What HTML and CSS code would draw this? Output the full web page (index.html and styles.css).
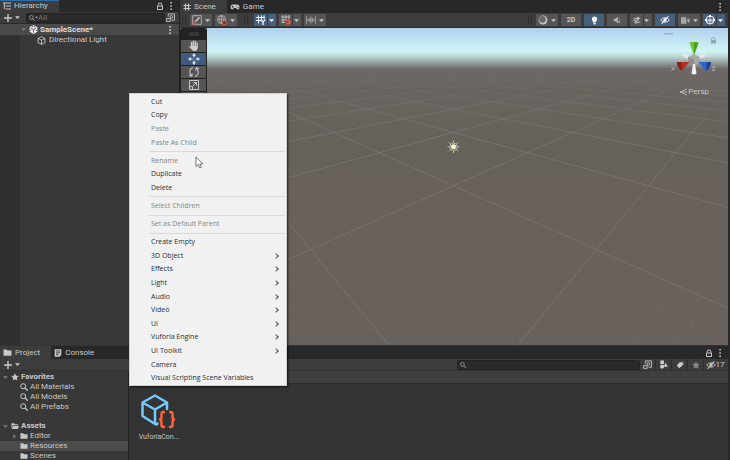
FILE: index.html
```html
<!DOCTYPE html>
<html lang="en">
<head>
<meta charset="utf-8">
<title>SampleScene</title>
<link rel="stylesheet" href="styles.css">
</head>
<body>
<svg class="sprite" aria-hidden="true">
  <symbol id="lock" viewBox="0 0 8 8"><path d="M2.200 3.500V2.200q0-1.200 1.800-1.200t1.800 1.200V4" fill="none" stroke="currentColor"/><path d="M1.500 4h5V7.500h-5z" fill="none" stroke="currentColor"/></symbol>
  <symbol id="dots" viewBox="0 0 8 8"><path d="M3.300 0h1.600v1.600H3.300zM3.300 3.200h1.600v1.600H3.300zM3.300 6.400h1.600V8H3.300z" fill="currentColor"/></symbol>
  <symbol id="plus" viewBox="0 0 8 8"><path d="M4 0v8M0 4h8" stroke="currentColor" stroke-width="1.400"/></symbol>
  <symbol id="down" viewBox="0 0 8 8"><path d="M0 2h8L4 6.500z" fill="currentColor"/></symbol>
  <symbol id="right" viewBox="0 0 8 8"><path d="M2 0v8l4.500-4z" fill="currentColor"/></symbol>
  <symbol id="search" viewBox="0 0 8 8"><circle cx="3.200" cy="3.200" r="2.500" fill="none" stroke="currentColor"/><path d="M5 5l2.700 2.700" stroke="currentColor" stroke-width="1.300"/></symbol>
  <symbol id="picker" viewBox="0 0 10 10"><path d="M2.500 4V1h7v7H6" fill="none" stroke="currentColor"/><path d="M.7 6h4v3.300h-4z" fill="none" stroke="currentColor"/><circle cx="6" cy="4.300" r="1.500" fill="none" stroke="currentColor"/></symbol>
  <symbol id="tree" viewBox="0 0 8 8"><path d="M0 1h8M2.500 4H8M2.500 7H8M1.300 1v6" fill="none" stroke="currentColor"/></symbol>
  <symbol id="hash" viewBox="0 0 8 8"><path d="M2.500.5v7M5.500.5v7M.5 2.500h7M.5 5.500h7" stroke="currentColor" stroke-width="1.100"/></symbol>
  <symbol id="game" viewBox="0 0 10 8"><path d="M2.500 1.500h5Q9.500 1.500 9.500 4T7.500 6.500L6 5H4L2.500 6.500Q.5 6.500.5 4t2-2.500z" fill="currentColor"/><path d="M1.700 3.800h2M2.700 2.800v2M6.500 3h1M7.500 4.500h1" stroke="#282828" stroke-width=".8"/></symbol>
  <symbol id="unity" viewBox="0 0 10 10"><path d="M5 0l4.300 2.500v5L5 10 .7 7.500v-5z" fill="#eee"/><path d="M5 5v3.500M5 5L2 3.300M5 5l3-1.700M4 .8v1.700M6 .8v1.700M.8 6.500L2.500 5.500M9.200 6.500L7.500 5.500" stroke="#444" stroke-width=".9"/></symbol>
  <symbol id="cube" viewBox="0 0 10 10"><path d="M5 .7l3.900 2v4.600L5 9.300l-3.900-2V2.700zM1.100 2.700L5 4.700l3.900-2M5 4.700v4.600" fill="none" stroke="currentColor" stroke-linejoin="round"/></symbol>
  <symbol id="folder" viewBox="0 0 9 8"><path d="M.5 1h3l1 1h4v5.200h-8z" fill="currentColor"/></symbol>
  <symbol id="open" viewBox="0 0 9 8"><path d="M.5 6V1h3l1 1H8v1.200H2L.5 7z" fill="currentColor"/><path d="M2.400 3.900H9L7.700 7.300H1z" fill="currentColor"/></symbol>
  <symbol id="star" viewBox="0 0 10 10"><path d="M5 .3l1.400 3 3.300.4-2.400 2.300.6 3.400L5 7.700 2.100 9.400l.6-3.400L.3 3.700l3.300-.4z" fill="currentColor"/></symbol>
  <symbol id="doc" viewBox="0 0 8 8"><path d="M.7.3h6.600v5.500L5.600 7.700H.7z" fill="currentColor"/><path d="M2 2h4M2 3.800h4M2 5.600h2.500" stroke="#282828" stroke-width=".8"/></symbol>
  <symbol id="pivot" viewBox="0 0 10 10"><path d="M4 .7H.7v8.600h5M9.300 5V.7H4M9.300 5v4.300H5" fill="none" stroke="#aaa"/><path d="M3 7l4.500-4.500" stroke="#ddd" stroke-width="1.200"/><circle cx="2.500" cy="7.500" r="1.500" fill="none" stroke="#f0583a"/></symbol>
  <symbol id="globe" viewBox="0 0 10 10"><circle cx="4.500" cy="4.500" r="4" fill="none" stroke="#b4b4b4" stroke-width=".9"/><path d="M.5 4.500h8M4.500.5v8M4.500.5q-4 4 0 8M4.500.5q4 4 0 8" fill="none" stroke="#b4b4b4" stroke-width=".7"/><path d="M5.700 6h3.500v3.300H5.700z" fill="#4a3a36" stroke="#e0573d"/></symbol>
  <symbol id="gridy" viewBox="0 0 10 10"><path d="M2.500.5v8M5.500.5v4M0 2.500h9M0 5.500h5M8 .5v3" stroke="#e8eef4" stroke-width="1.100"/><path d="M5 4.500l2 2.700 2-2.700M7 7v3" fill="none" stroke="#fff" stroke-width="1.300"/></symbol>
  <symbol id="magnet" viewBox="0 0 10 10"><path d="M2 0v8M5 0v4.500M8 0v4.500M0 2h9M0 5h5M0 7.500h4" stroke="#b8b8b8"/><path d="M5 5.500h2q2 0 2 1.500T7 8.700H5" fill="none" stroke="#f0583a" stroke-width="1.700"/></symbol>
  <symbol id="step" viewBox="0 0 12 10"><path d="M.7.5v9M11.300.5v9M4 2.500v5M6 1v8M8 2.500v5M1 5h10" stroke="#b0b0b0"/></symbol>
  <symbol id="hand" viewBox="0 0 12 12"><path d="M3.500 7V2.500M5.300 6V1.300M7.200 6V1.500M9 7V3" stroke="#ccc" stroke-width="1.400" stroke-linecap="round"/><path d="M2.800 6h7v2.500L8 11H5.200L1 6.800q.7-1 1.800 0z" fill="#ccc"/></symbol>
  <symbol id="move" viewBox="0 0 12 12"><path d="M6 0l2 2.700H4zM6 12l2-2.700H4zM0 6l2.700-2v4zM12 6L9.300 4v4z" fill="#dce6f0"/><path d="M6 2v2.500M6 7.500V10M2 6h2.500M7.500 6H10" stroke="#dce6f0" stroke-width="1.200"/></symbol>
  <symbol id="rotate" viewBox="0 0 12 12"><path d="M5 1.500Q1 3 2 7l1.500 3M7 10.500q4-1.500 3-5.500L8.500 2M1 9.500l2.800.8.500-2.800M11 2.500l-2.800-.8-.5 2.800" fill="none" stroke="#c4c4c4" stroke-width="1.100"/></symbol>
  <symbol id="scale" viewBox="0 0 12 12"><path d="M1.500 1.500h9v9h-9zM1.500 7.500h3v3" fill="none" stroke="#c4c4c4"/><path d="M5 7l3.500-3.500M5.500 3.500h3v3" fill="none" stroke="#c4c4c4"/></symbol>
  <symbol id="ball" viewBox="0 0 10 10"><circle cx="5" cy="5" r="4.500" fill="#c4c4c4"/><circle cx="4.400" cy="4.400" r="3.300" fill="#686868"/></symbol>
  <symbol id="bulb" viewBox="0 0 10 10"><path d="M5 .5a3 3 0 0 1 2 5.200L6.500 7h-3L3 5.700A3 3 0 0 1 5 .5zM3.700 7.500h2.600v1L5.500 9.500h-1l-.8-1z" fill="#fff"/></symbol>
  <symbol id="sound" viewBox="0 0 10 10"><path d="M1 3.500h2L6 1v8L3 6.500H1z" fill="#b4b4b4"/><path d="M7 3l2 1.500M6.500 6.500L9 9M9 6L6.500 8.500" stroke="#b4b4b4"/></symbol>
  <symbol id="fx" viewBox="0 0 10 10"><path d="M1 3h8M0 5.200h7M2 7.800h7" stroke="#c4c4c4" stroke-width="1.200"/><path d="M6 1l1.500 2L6 5zM4 6l-1.500 1.800L4 9.500z" fill="#c4c4c4" stroke="#c4c4c4"/></symbol>
  <symbol id="eye" viewBox="0 0 12 10"><path d="M.7 5Q6-.5 11.300 5 6 10.500.7 5z" fill="none" stroke="currentColor"/><circle cx="6" cy="5" r="2" fill="currentColor"/><path d="M2 9.500L10 .5" stroke="currentColor" stroke-width="1.300"/></symbol>
  <symbol id="camera" viewBox="0 0 10 10"><path d="M0 1.500h6v7H0zM6.700 4.500L9.500 2v6L6.700 5.500z" fill="#a8a8a8"/></symbol>
  <symbol id="gizmo" viewBox="0 0 10 10"><circle cx="5" cy="5" r="4" fill="none" stroke="#e8eef4"/><path d="M1 5h8M5 1v8M1.800 7.500Q5 4 8.200 7.500" fill="none" stroke="#e8eef4" stroke-width=".9"/><path d="M4 0h2v2H4zM0 4h2v2H0zM8 4h2v2H8z" fill="#fff"/></symbol>
  <symbol id="types" viewBox="0 0 10 10"><path d="M1.500.5h4v4h-4zM7 3l3 4.500H5.500z" fill="#ccc"/><circle cx="3.500" cy="7.300" r="2.300" fill="#ccc"/></symbol>
  <symbol id="tag" viewBox="0 0 10 10"><path d="M4.500 1.500L9 .8l.2 3.700L4 9 1 5.500z" fill="#ccc"/><circle cx="7.700" cy="2.300" r=".7" fill="#383838"/></symbol>
</svg>

<main class="top">
  <section class="hierarchy">
    <header class="tabs">
      <button class="tab active focus"><svg class="i8"><use href="#tree"/></svg>Hierarchy</button>
      <span class="grow"></span>
      <button class="icon" aria-label="Lock"><svg class="i8"><use href="#lock"/></svg></button>
      <button class="icon" aria-label="Menu"><svg class="i8"><use href="#dots"/></svg></button>
    </header>
    <div class="bar">
      <button class="icon add" aria-label="Add"><svg class="i8"><use href="#plus"/></svg><svg class="i5"><use href="#down"/></svg></button>
      <label class="search"><svg class="i6"><use href="#search"/></svg><svg class="i3"><use href="#down"/></svg><input placeholder="All" aria-label="Search hierarchy"></label>
      <button class="icon pick" aria-label="Picker"><svg class="i9"><use href="#picker"/></svg></button>
    </div>
    <div class="node scene-node"><svg class="i5 fold"><use href="#down"/></svg><svg class="i9"><use href="#unity"/></svg><b>SampleScene*</b><span class="grow"></span><svg class="i8"><use href="#dots"/></svg></div>
    <div class="children"><div class="node child"><svg class="i9"><use href="#cube"/></svg>Directional Light</div></div>
  </section>

  <section class="scene">
    <header class="tabs">
      <button class="tab active"><svg class="i8"><use href="#hash"/></svg>Scene</button>
      <button class="tab"><svg class="i10"><use href="#game"/></svg>Game</button>
      <span class="grow"></span>
      <button class="icon" aria-label="Menu"><svg class="i8"><use href="#dots"/></svg></button>
    </header>
    <div class="bar tools">
      <span class="grip"></span>
      <button class="tool" aria-label="Pivot"><svg class="i10"><use href="#pivot"/></svg><svg class="i5"><use href="#down"/></svg></button>
      <button class="tool" aria-label="Global"><svg class="i10"><use href="#globe"/></svg><svg class="i5"><use href="#down"/></svg></button>
      <span class="grip wide"></span>
      <button class="tool on split" aria-label="Grid"><svg class="i10"><use href="#gridy"/></svg><svg class="i5"><use href="#down"/></svg></button>
      <button class="tool split" aria-label="Snap"><svg class="i10"><use href="#magnet"/></svg><svg class="i5"><use href="#down"/></svg></button>
      <button class="tool" aria-label="Increment"><svg class="i10"><use href="#step"/></svg><svg class="i5"><use href="#down"/></svg></button>
      <span class="grow"></span>
      <span class="grip"></span>
      <button class="tool" aria-label="Shading"><svg class="i10"><use href="#ball"/></svg><svg class="i5"><use href="#down"/></svg></button>
      <button class="tool single">2D</button>
      <button class="tool single on" aria-label="Lighting"><svg class="i9"><use href="#bulb"/></svg></button>
      <button class="tool single" aria-label="Audio"><svg class="i8"><use href="#sound"/></svg></button>
      <button class="tool split" aria-label="Effects"><svg class="i8"><use href="#fx"/></svg><svg class="i5"><use href="#down"/></svg></button>
      <button class="tool single on" aria-label="Visibility"><svg class="i10"><use href="#eye"/></svg></button>
      <button class="tool" aria-label="Camera"><svg class="i9"><use href="#camera"/></svg><svg class="i5"><use href="#down"/></svg></button>
      <button class="tool on split" aria-label="Gizmos"><svg class="i10"><use href="#gizmo"/></svg><svg class="i5"><use href="#down"/></svg></button>
    </div>
    <div class="view">
      <svg class="ground" viewBox="180 28 548 318" preserveAspectRatio="xMidYMid slice" aria-hidden="true">
        <defs>
          <linearGradient id="far" gradientUnits="userSpaceOnUse" x1="0" y1="70" x2="0" y2="140"><stop offset="0" stop-color="#000"/><stop offset=".5" stop-color="#999"/><stop offset="1" stop-color="#fff"/></linearGradient>
          <linearGradient id="near" gradientUnits="userSpaceOnUse" x1="0" y1="190" x2="0" y2="340"><stop offset="0" stop-color="#000"/><stop offset="1" stop-color="#fff"/></linearGradient>
          <mask id="mfar" maskUnits="userSpaceOnUse" x="180" y="28" width="548" height="318"><path d="M180 28h548v318H180z" fill="url(#far)"/></mask>
          <mask id="mnear" maskUnits="userSpaceOnUse" x="180" y="28" width="548" height="318"><path d="M180 28h548v318H180z" fill="url(#near)"/></mask>
        </defs>
        <g mask="url(#mfar)"><path id="major" fill="none" stroke="#7a8084" stroke-width=".8" opacity=".75"/></g>
        <g mask="url(#mnear)"><path id="minor" fill="none" stroke="#727673" stroke-width=".7" opacity=".5"/></g>
        <g stroke="#d8d4c8" stroke-width=".8"><path d="M453.500 141v2M453.500 151.500v2M447.500 147.300h2M457.500 147.300h2M449 143l1.500 1.500M458 143l-1.500 1.500M449 151.700l1.500-1.500M458 151.700l-1.500-1.500"/><circle cx="453.500" cy="147.300" r="3.700" fill="#5e5a50"/><circle cx="453.500" cy="147.300" r="2.500" fill="#fffbd0" stroke="none"/></g>
      </svg>
      <div class="palette">
        <span class="handle"></span>
        <button class="mode" aria-label="Hand"><svg class="i12"><use href="#hand"/></svg></button>
        <button class="mode on" aria-label="Move"><svg class="i12"><use href="#move"/></svg></button>
        <button class="mode" aria-label="Rotate"><svg class="i12"><use href="#rotate"/></svg></button>
        <button class="mode" aria-label="Scale"><svg class="i12"><use href="#scale"/></svg></button>
        <span class="mode"></span>
      </div>
      <div class="axis">
        <svg class="compass" viewBox="662 30 64 50" aria-hidden="true">
          <path d="M664 33h9v1.500h-9z" fill="#a0b3bb"/>
          <path d="M711.500 40v-1.200q0-1 1.900-1t1.900 1V40" fill="none" stroke="#a0adb0"/><path d="M711 40h5v3.500h-5z" fill="#98a8ac"/>
          <path d="M691.500 35.500l1.500 2 1.500-2M693 37.500v2.500" fill="none" stroke="#d8e0e2" stroke-width=".8"/>
          <path d="M671.500 67l3 3.500M674.500 67l-3 3.500M712 67h3l-3 3.500h3" fill="none" stroke="#b8bcbc" stroke-width=".8"/>
          <path d="M683 53.500q3-1.500 5 1l4 3-2 2.500-4.500-2.200q-4.500-1-2.500-4.300zM705 53.500q-3-1.500-5 1l-4 3 2 2.500 4.500-2.200q4.500-1 2.500-4.300z" fill="#e0e5e5"/>
          <path d="M689.500 42.500q4.500-1.500 9 0L694 55.500z" fill="#6cc72f"/><path d="M694 42.500h4.500L694 55.500z" fill="#4f9e24"/>
          <path d="M688 57l6-2.500 6 2.500-.8 6-5.200 3-5.200-3z" fill="#a6a8a8"/><path d="M688 57l6 2.500v6.500l-5.200-3z" fill="#8d8f8f"/>
          <path d="M677 62l12.500 0-7.500 9q-4.500-3-5-9z" fill="#b52f20"/><path d="M677 62h4l1 9q-4.500-3-5-9z" fill="#822218"/>
          <path d="M711 62l-12.500 0 7.500 9q4.500-3 5-9z" fill="#2d63d0"/><path d="M711 62h-4l-1 9q4.500-3 5-9z" fill="#1c418f"/>
          <path d="M693 64h2l1.500 9.500q-2.500 2-5 0z" fill="#f0f0f0"/>
        </svg>
        <button class="persp"><svg class="i8" viewBox="0 0 8 8"><path d="M8 1L1 4l7 3M1 4h7" fill="none" stroke="currentColor" stroke-width=".8"/></svg>Persp</button>
      </div>
    </div>
  </section>
</main>

<section class="project">
  <header class="tabs">
    <button class="tab active"><svg class="i9"><use href="#folder"/></svg>Project</button>
    <button class="tab"><svg class="i8"><use href="#doc"/></svg>Console</button>
    <span class="grow"></span>
    <button class="icon" aria-label="Lock"><svg class="i8"><use href="#lock"/></svg></button>
    <button class="icon" aria-label="Menu"><svg class="i8"><use href="#dots"/></svg></button>
  </header>
  <div class="bar">
    <button class="icon add" aria-label="Add"><svg class="i8"><use href="#plus"/></svg><svg class="i5"><use href="#down"/></svg></button>
    <span class="grow"></span>
    <label class="search assets"><svg class="i6"><use href="#search"/></svg><input aria-label="Search assets"></label>
    <button class="cell" aria-label="Picker"><svg class="i9"><use href="#picker"/></svg></button>
    <button class="cell" aria-label="Type"><svg class="i9"><use href="#types"/></svg></button>
    <button class="cell" aria-label="Label"><svg class="i8"><use href="#tag"/></svg></button>
    <button class="cell dim" aria-label="Favorite"><svg class="i8"><use href="#star"/></svg></button>
    <button class="cell count"><svg class="i10"><use href="#eye"/></svg>17</button>
  </div>
  <div class="split-view">
    <nav class="folders">
      <div class="node"><svg class="i5 fold"><use href="#down"/></svg><svg class="i8"><use href="#star"/></svg><b>Favorites</b></div>
      <div class="node leaf"><svg class="i8"><use href="#search"/></svg>All Materials</div>
      <div class="node leaf"><svg class="i8"><use href="#search"/></svg>All Models</div>
      <div class="node leaf"><svg class="i8"><use href="#search"/></svg>All Prefabs</div>
      <div class="node group"><svg class="i5 fold"><use href="#down"/></svg><svg class="i8"><use href="#open"/></svg><b>Assets</b></div>
      <div class="node branch"><svg class="i5 fold"><use href="#right"/></svg><svg class="i8"><use href="#folder"/></svg>Editor</div>
      <div class="node leaf selected"><svg class="i8"><use href="#folder"/></svg>Resources</div>
      <div class="node leaf"><svg class="i8"><use href="#folder"/></svg>Scenes</div>
    </nav>
    <div class="content">
      <div class="crumbs"></div>
      <figure class="asset">
        <svg class="thumb" viewBox="0 0 38 36" aria-hidden="true"><path d="M27 16V9.500L15 2.500 2.500 9.500V23L15 31q2 1 2.500-.5M2.500 9.500L15 16.500l12-7M15 16.500V31" fill="none" stroke="#74c8fb" stroke-width="2.500" stroke-linecap="round" stroke-linejoin="round"/><path d="M25 19h-1.500q-2 0-2 2v3q0 2.500-2.500 2.500 2.500 0 2.500 2.500v3q0 2 2 2H25M29 19h1.500q2 0 2 2v3q0 2.500 2.500 2.500-2.500 0-2.500 2.500v3q0 2-2 2H29" fill="none" stroke="#f9643b" stroke-width="2.500"/></svg>
        <figcaption>VuforiaCon...</figcaption>
      </figure>
    </div>
  </div>
</section>

<div class="menu" role="menu">
  <button role="menuitem">Cut</button>
  <button role="menuitem">Copy</button>
  <button role="menuitem" disabled>Paste</button>
  <button role="menuitem" disabled>Paste As Child</button>
  <hr>
  <button role="menuitem" disabled>Rename</button>
  <button role="menuitem">Duplicate</button>
  <button role="menuitem">Delete</button>
  <hr>
  <button role="menuitem" disabled>Select Children</button>
  <hr>
  <button role="menuitem" disabled>Set as Default Parent</button>
  <hr>
  <button role="menuitem">Create Empty</button>
  <button role="menuitem" class="sub">3D Object</button>
  <button role="menuitem" class="sub">Effects</button>
  <button role="menuitem" class="sub">Light</button>
  <button role="menuitem" class="sub">Audio</button>
  <button role="menuitem" class="sub">Video</button>
  <button role="menuitem" class="sub">UI</button>
  <button role="menuitem" class="sub">Vuforia Engine</button>
  <button role="menuitem" class="sub">UI Toolkit</button>
  <button role="menuitem">Camera</button>
  <button role="menuitem">Visual Scripting Scene Variables</button>
</div>
<svg class="cursor" viewBox="0 0 9 13" aria-hidden="true"><path d="M1 1v9.500l2.300-2 1.500 3.500 1.500-.7L4.800 8h3z" fill="#fff" stroke="#555" stroke-width=".8"/></svg>
<script src="grid.js"></script>
</body>
</html>
```

FILE: grid.js
```js
// Ground plane grid: two families of lines, each running to its own vanishing point.
const horizon = 49;
const base = 250;
const spacing = 285.8;
function family(vx, step, range) {
  let d = "";
  for (let m = -range; m <= range; m += step) {
    const x = 453.4 + spacing * m;
    d += "M" + vx + " " + horizon + "L" + (vx + (x - vx) * 2).toFixed(1) + " " + (horizon + (base - horizon) * 2);
  }
  return d;
}
const left = 145.7;
const right = 761.1;
document.getElementById("major").setAttribute("d", family(left, 1, 12.5) + family(right, 1, 12.5));
document.getElementById("minor").setAttribute("d", family(left, 0.1, 3.5) + family(right, 0.1, 3.5));
```

FILE: styles.css
```css
* { box-sizing: border-box; }
body {
  margin: 0;
  height: 100vh;
  display: flex;
  flex-direction: column;
  overflow: hidden;
  background: #1f1f1f;
  color: #c8c8c8;
  font: 8px/10px Roboto, "Liberation Sans", sans-serif;
}
button, input { font: inherit; color: inherit; border: 0; padding: 0; margin: 0; background: none; }
svg { display: block; flex: none; }
.sprite { display: none; }
.grow { flex: 1; }
.i3 { width: 3px; height: 3px; }
.i5 { width: 5px; height: 5px; }
.i6 { width: 6px; height: 6px; }
.i8 { width: 8px; height: 8px; }
.i9 { width: 9px; height: 9px; }
.i10 { width: 10px; height: 10px; }
.i12 { width: 12px; height: 12px; }

.top { flex: 1; display: flex; gap: 1px; min-height: 0; }
.hierarchy { width: 179px; display: flex; flex-direction: column; background: #383838; }
.scene { flex: 1; display: flex; flex-direction: column; border-right: 2px solid #282828; }

.tabs { display: flex; height: 12px; background: #282828; flex: none; padding-right: 3px; }
.tab { display: flex; align-items: center; gap: 3px; padding: 0 11px 0 3px; }
.tab.active { background: #3c3c3c; }
.tab.focus { box-shadow: inset 0 1px #2c6aa8; }
.icon { display: flex; align-items: center; justify-content: center; width: 11px; }
.bar { display: flex; align-items: center; height: 12px; background: #3c3c3c; border-bottom: 1px solid #2a2a2a; flex: none; }
.icon.add { width: 23px; gap: 3px; }
.search { display: flex; align-items: center; height: 10px; background: #2a2a2a; border: 1px solid #222; border-radius: 2px; padding-left: 2px; color: #aaa; }
.search input { min-width: 0; flex: 1; outline: 0; height: 8px; }
.search input::placeholder { color: #777; opacity: 1; }
.hierarchy .search { flex: 1; margin-left: 3px; }
.icon.pick { width: 14px; padding-right: 3px; }

.node { display: flex; align-items: center; gap: 2px; height: 10px; padding-left: 3px; white-space: nowrap; }
.fold { color: #777; margin-right: 1px; }
.scene-node { height: 11px; background: #4a4a4a; padding: 0 5px 0 21px; color: #ddd; }
.children { flex: 1; border-left: 20px solid #303030; }
.child { padding-left: 17px; gap: 3px; }

.scene .tabs { height: 13px; }
.tools { height: 15px; gap: 3px; padding: 0 3px 0 2px; }
.grip { width: 4px; height: 10px; border: solid #2e2e2e; border-width: 0 1px; margin-right: 1px; }
.grip.wide { margin: 0 3px 0 4px; }
.tool { display: flex; align-items: center; justify-content: center; gap: 3px; width: 22px; height: 12px; background: #555; border-radius: 1px; color: #c8c8c8; }
.tool.single { width: 20px; font-size: 7px; font-weight: 700; }
.tool.on { background: #46607c; color: #fff; }
.tool.split { background: linear-gradient(90deg, transparent 13px, #3a3a3a 13px, #3a3a3a 14px, transparent 14px) #555; }
.tool.on.split { background-color: #46607c; }

.view {
  flex: 1;
  position: relative;
  display: flex;
  justify-content: space-between;
  align-items: flex-start;
  min-height: 0;
  background: linear-gradient(#b0cfec 0, #c0e0f2 10px, #d0f4f6 23px, #c0dada 28px, #98a5a4 34px, #6e6867 41px, #69645f 60px, #67615b 120px, #69615c 180px, #69615c 100%);
}
.ground { position: absolute; inset: 0; width: 100%; height: 100%; }
.palette { position: relative; display: flex; flex-direction: column; gap: 1px; width: 27px; padding: 1px; background: #222; border-radius: 2px; }
.handle { height: 4px; width: 10px; margin: 3px auto; background: #383838; }
.mode { display: flex; align-items: center; justify-content: center; height: 12px; background: #555; }
.mode.on { background: #3f5c80; }
.axis { position: relative; display: flex; flex-direction: column; align-items: center; padding-top: 2px; width: 68px; }
.compass { width: 64px; height: 50px; }
.persp { display: flex; align-items: center; gap: 1px; margin-top: 7px; }

.project { display: flex; flex-direction: column; flex: none; height: 25vh; background: #333; border-right: 2px solid #282828; padding-top: 1px; }
.project .tabs { height: 13px; }
.project .bar { border-bottom-color: #333; }
.assets { width: 183px; }
.assets input { width: 0; }
.cell { display: flex; align-items: center; justify-content: center; width: 16px; height: 11px; border-right: 1px solid #2c2c2c; }
.cell.dim { color: #888; }
.cell.count { width: 24px; border: 0; padding-right: 2px; }
.split-view { flex: 1; display: flex; min-height: 0; }
.folders { width: 129px; background: #383838; border-right: 1px solid #252525; padding-top: 1px; overflow: hidden; }
.leaf { padding-left: 20px; }
.branch { padding-left: 12px; }
.group { margin-top: 9px; }
.selected { background: #4c4c4c; }
.content { flex: 1; }
.crumbs { height: 13px; background: #3e3e3e; border-bottom: 1px solid #2c2c2c; }
.asset { margin: 9px 0 0 7px; width: 46px; display: flex; flex-direction: column; align-items: center; gap: 3px; font-size: 7px; }
.thumb { width: 38px; height: 36px; }

.menu {
  position: absolute;
  left: 129px;
  top: 93px;
  width: 158px;
  height: 293px;
  display: flex;
  flex-direction: column;
  padding: 1px 1px 0;
  background: #f1f1f1;
  border: 1px solid #d0d0d0;
  box-shadow: 1px 1px 2px #000a;
  color: #22323a;
  font: 7px/10px "Open Sans", "Noto Sans", sans-serif;
}
.menu button { flex: 3 0 0; display: flex; align-items: center; padding-left: 20px; text-align: left; }
.menu button:disabled { color: #7d8886; }
.menu hr { flex: 1 0 0; width: 136px; margin: 0 0 0 auto; border: 0; background: linear-gradient(#d9d9d9, #d9d9d9) center / 100% 1px no-repeat; }
.sub::after { content: ""; width: 3px; height: 3px; margin: 0 7px 0 auto; border: solid #555; border-width: 1px 1px 0 0; transform: rotate(45deg); }
.cursor { position: absolute; left: 195px; top: 156px; width: 9px; height: 13px; }
```
